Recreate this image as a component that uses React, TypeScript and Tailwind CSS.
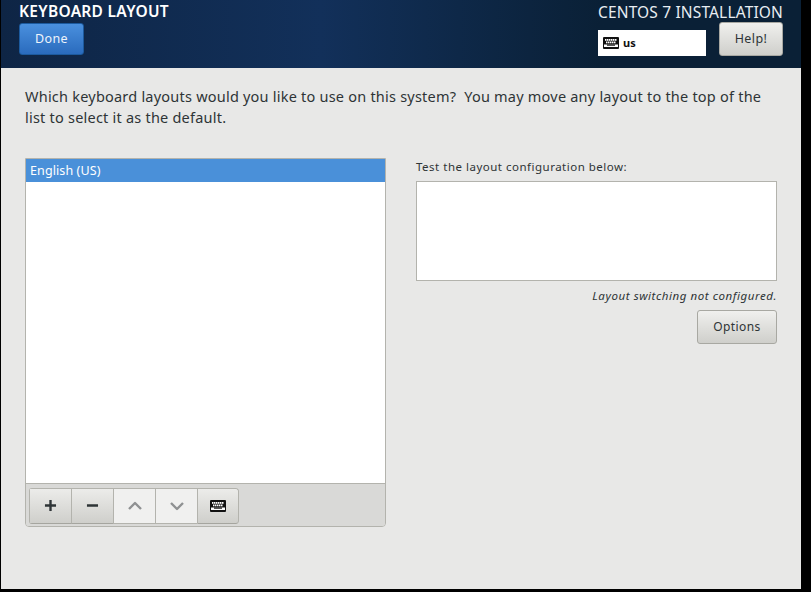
import React from "react";
import { Plus, Minus, ChevronUp, ChevronDown } from "lucide-react";

const font = "font-['Noto_Sans',sans-serif]";

function KeyboardIcon({ size = 16 }: { size?: number }) {
    // Solid keyboard glyph with knocked out keys
    const keys: number[][] = [];
    for (let x = 2; x < 14; x += 2) keys.push([x, 2]);
    for (let x = 3; x < 13; x += 2) keys.push([x, 4.5]);
    return (
        <svg width={size} height={Math.round(size * 0.75)} viewBox="0 0 16 12">
            <rect x="0" y="0" width="16" height="12" rx="1" fill="#111" />
            {keys.map(([x, y]) => (
                <rect key={`${x}-${y}`} x={x} y={y} width="1.5" height="1.8" fill="#fff" />
            ))}
            <rect x="1" y="7.5" width="14" height="2.5" fill="#fff" />
            <rect x="4" y="7.5" width="8" height="1.2" fill="#111" />
        </svg>
    );
}

function ToolButton({ children, enabled, last }: { children: React.ReactNode; enabled?: boolean; last?: boolean }) {
    return (
        <div
            className={`w-[42px] h-[36px] flex items-center justify-center border-y border-l border-[#b3b3ad] ${last ? "border-r rounded-r-[3px]" : ""} ${
                enabled ? "bg-gradient-to-b from-[#ececea] to-[#cfcfcb] border-b-[#a5a59f]" : "bg-[#f0f0ef]"
            }`}
        >
            {children}
        </div>
    );
}

export default function App() {
    return (
        <div className={`${font} w-[811px] h-[592px] bg-black overflow-hidden`}>
            <div className="w-[800px] h-[589px] ml-[1px] flex flex-col bg-[#e8e8e7]">
                <header className="h-[68px] shrink-0 bg-gradient-to-r from-[#0e2545] via-[#12305a] via-40% to-[#0a2036] to-75% flex justify-between pl-[18px] pr-[18px]">
                    <div>
                        <h1 className="text-[15.5px] leading-[22px] font-semibold text-white tracking-[0.3px]">KEYBOARD LAYOUT</h1>
                        <button className="mt-[1px] w-[65px] h-[32px] rounded-[3px] border border-[#1c5a9e] bg-gradient-to-b from-[#4a90de] to-[#2a6bbd] text-[#eef4fb] text-[12.5px] tracking-[0.4px]">
                            Done
                        </button>
                    </div>
                    <div className="flex flex-col items-end">
                        <div className="text-[15.5px] leading-[22px] text-[#e8edf2] tracking-[0.15px] mt-[1px]">CENTOS 7 INSTALLATION</div>
                        <div className="flex items-start gap-[13px] -mt-[1px]">
                            <div className="w-[108px] h-[26px] mt-[8px] bg-white flex items-center pl-[5px] gap-[4px]">
                                <KeyboardIcon />
                                <span className="text-[11px] font-bold text-[#111]">us</span>
                            </div>
                            <button className="w-[64px] h-[34px] rounded-[3px] border border-[#a8a8a2] bg-gradient-to-b from-[#f0f0ee] to-[#cfcfcb] text-[#2e3436] text-[12.5px] tracking-[0.4px]">
                                Help!
                            </button>
                        </div>
                    </div>
                </header>

                <main className="pl-[24px] pr-[24px] pt-[18px] text-[#2e3436]">
                    <p className="text-[14.5px] leading-[21px] tracking-[0.22px] w-[752px]">
                        Which keyboard layouts would you like to use on this system?&nbsp; You may move any layout to the top of the list to select it as the default.
                    </p>
                    <div className="flex gap-[30px] mt-[30px]">
                        <div className="w-[361px] h-[369px] border border-[#b3b3ad] rounded-b-[4px] flex flex-col overflow-hidden">
                            <div className="flex-1 bg-white">
                                <div className="h-[23px] bg-[#4a90d9] text-white text-[12.5px] leading-[23px] pl-[4px] tracking-[0.1px]">English (US)</div>
                            </div>
                            <div className="h-[43px] shrink-0 bg-[#d9d9d7] border-t border-[#b3b3ad] flex items-center pl-[3px] pt-[1px]">
                                <div className="flex rounded-[3px] overflow-hidden">
                                    <ToolButton enabled><Plus size={19} strokeWidth={3} strokeLinecap="butt" color="#2e3436" /></ToolButton>
                                    <ToolButton enabled><Minus size={19} strokeWidth={3} strokeLinecap="butt" color="#2e3436" /></ToolButton>
                                    <ToolButton><ChevronUp size={24} strokeWidth={2.4} strokeLinecap="butt" color="#8f9192" /></ToolButton>
                                    <ToolButton><ChevronDown size={24} strokeWidth={2.4} strokeLinecap="butt" color="#8f9192" /></ToolButton>
                                    <ToolButton enabled last><KeyboardIcon /></ToolButton>
                                </div>
                            </div>
                        </div>
                        <div className="w-[361px] flex flex-col items-end">
                            <label className="self-start text-[11.5px] leading-[16px] mt-[1px] tracking-[0.5px]">Test the layout configuration below:</label>
                            <div className="w-full h-[100px] mt-[6px] bg-white border border-[#b3b3ad]" />
                            <div className="italic text-[11.5px] leading-[16px] mt-[7px] tracking-[0.57px]">Layout switching not configured.</div>
                            <button className="w-[80px] h-[34px] mt-[6px] rounded-[3px] border border-[#a8a8a2] bg-gradient-to-b from-[#f0f0ee] to-[#cfcfcb] text-[12px] tracking-[0.4px]">
                                Options
                            </button>
                        </div>
                    </div>
                </main>
            </div>
        </div>
    );
}
